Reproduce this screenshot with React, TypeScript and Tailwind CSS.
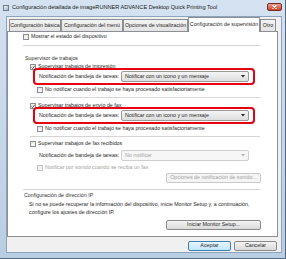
import { ReactNode } from 'react'

const Box = ({ checked, disabled }: { checked?: boolean; disabled?: boolean }) => (
  <span
    className={`flex h-[6px] w-[6px] shrink-0 items-center justify-center border ${
      disabled ? 'border-[#c4c4c4] bg-[#f4f4f4]' : 'border-[#8e8f8f] bg-gradient-to-b from-[#e6e6e6] to-[#fbfbfb]'
    }`}
  >
    {checked && (
      <svg width="5" height="5" viewBox="0 0 5 5">
        <path d="M0.6 2.4 L2 3.9 L4.4 0.8" stroke="#27406b" strokeWidth="1.1" fill="none" />
      </svg>
    )}
  </span>
)

const Check = ({
  label,
  checked,
  disabled,
  className,
}: {
  label: string
  checked?: boolean
  disabled?: boolean
  className: string
}) => (
  <div className={`flex h-[8px] items-center gap-[2px] ${className}`}>
    <Box checked={checked} disabled={disabled} />
    <span className={disabled ? 'text-[#a3a3a3]' : ''}>{label}</span>
  </div>
)

const Arrow = ({ disabled }: { disabled?: boolean }) => (
  <svg width="4" height="3" viewBox="0 0 4 3" className="ml-auto">
    <path d="M0 0 H4 L2 2.5 Z" fill={disabled ? '#b5b5b5' : '#222'} />
  </svg>
)

const Select = ({ value, disabled }: { value: string; disabled?: boolean }) => (
  <div
    className={`flex h-[11px] w-[128px] items-center rounded-[2px] border px-[3px] ${
      disabled
        ? 'border-[#cfcfcf] bg-[#f6f6f6] text-[#a3a3a3]'
        : 'border-[#9a9a9a] bg-gradient-to-b from-[#f5f5f5] to-[#dddddd]'
    }`}
  >
    <span>{value}</span>
    <Arrow disabled={disabled} />
  </div>
)

const Btn = ({ children, disabled, className }: { children: ReactNode; disabled?: boolean; className: string }) => (
  <div
    className={`flex h-[10px] items-center justify-center rounded-[2px] border ${
      disabled
        ? 'border-[#c9c9c9] bg-[#f4f4f4] text-[#a3a3a3]'
        : 'border-[#8a8a8a] bg-gradient-to-b from-[#f3f3f3] to-[#dadada]'
    } ${className}`}
  >
    {children}
  </div>
)

// red highlight frame around the tray notification row
const Notify = ({ className }: { className: string }) => (
  <div className={`ml-[25px] flex h-[17px] w-[222px] items-center rounded-[4px] border-2 border-[#e60012] pl-[4px] pr-[4px] ${className}`}>
    <span>Notificación de bandeja de tareas:</span>
    <div className="ml-auto">
      <Select value="Notificar con un icono y un mensaje" />
    </div>
  </div>
)

const Tab = ({ label, w }: { label: string; w: string }) => (
  <div
    className={`mt-[2px] flex h-[12px] items-center justify-center border border-b-0 border-[#8c8e94] bg-gradient-to-b from-[#f3f3f3] to-[#e3e3e3] ${w}`}
  >
    {label}
  </div>
)

export default function App() {
  return (
    <div
      className="flex h-[259px] w-[286px] flex-col overflow-hidden border-r border-b border-[#4e6a88] bg-gradient-to-b from-[#d4e2f1] to-[#b9cde3] text-[5.3px] leading-none text-[#262626]"
      style={{ fontFamily: '"Liberation Sans", Arial, sans-serif' }}
    >
      {/* title bar */}
      <div className="flex h-[16px] shrink-0 items-center pl-[3px]">
        <div className="h-[6px] w-[6px] border border-[#6b7c8f] bg-gradient-to-br from-[#f7f7f7] to-[#9fb3c8]" />
        <span className="ml-[3px] text-[5.6px] text-[#1a1a1a]">
          Configuración detallada de imageRUNNER ADVANCE Desktop Quick Printing Tool
        </span>
        <div className="mb-[3px] ml-auto mr-[3px] flex h-[8px] w-[15px] items-center justify-center rounded-[2px] border border-[#7a2d22] bg-gradient-to-b from-[#e8a090] to-[#c4422b]">
          <svg width="5" height="4" viewBox="0 0 5 4">
            <path d="M0.5 0.3 L4.5 3.7 M4.5 0.3 L0.5 3.7" stroke="#fff" strokeWidth="1.1" />
          </svg>
        </div>
      </div>

      {/* client */}
      <div className="ml-[6px] mr-[3px] flex h-[237px] flex-col border border-[#8da4bd] bg-[#f0f0f0] pr-[3px]">
        {/* tabs */}
        <div className="flex h-[14px] items-end pl-[2px]">
          <Tab label="Configuración básica" w="w-[52px]" />
          <Tab label="Configuración del menú" w="w-[62px]" />
          <Tab label="Opciones de visualización" w="w-[65px]" />
          <div className="relative z-10 -mb-px flex h-[15px] w-[72px] items-center justify-center border border-b-0 border-[#8c8e94] bg-white">
            Configuración de supervisión
          </div>
          <Tab label="Otro" w="w-[16px]" />
        </div>

        {/* panel */}
        <div className="flex h-[206px] flex-col border border-[#8c8e94] bg-white">
          <Check label="Mostrar el estado del dispositivo" className="ml-[15px] mt-[1px]" />
          <div className="ml-[15px] mt-[4px] h-px w-[237px] bg-[#d5d5d5]" />

          <div className="ml-[17px] mt-[9px] flex h-[8px] items-center text-[#333]">Supervisor de trabajos</div>
          <Check label="Supervisar trabajos de impresión" checked className="ml-[22px]" />
          <Notify className="-mt-[3px]" />
          <Check label="No notificar cuando el trabajo se haya procesado satisfactoriamente" className="ml-[29px] mt-[1px]" />
          <div className="ml-[22px] mt-[3px] h-px w-[230px] bg-[#d5d5d5]" />

          <Check label="Supervisar trabajos de envío de fax" checked className="ml-[22px] mt-[4px]" />
          <Notify className="-mt-[3px]" />
          <Check label="No notificar cuando el trabajo se haya procesado satisfactoriamente" className="ml-[29px] mt-[1px]" />
          <div className="ml-[22px] mt-[3px] h-px w-[230px] bg-[#d5d5d5]" />

          <Check label="Supervisar trabajos de fax recibidos" className="ml-[22px] mt-[3px]" />
          <div className="ml-[31px] mt-[2px] flex h-[11px] w-[210px] items-center">
            <span>Notificación de bandeja de tareas:</span>
            <div className="ml-auto">
              <Select value="No notificar" disabled />
            </div>
          </div>
          <Check label="Notificar por sonido cuando se reciba un fax" disabled className="ml-[29px] mt-[3px]" />
          <Btn disabled className="mr-[16px] mt-[1px] w-[95px] self-end">
            Opciones de notificación de sonido...
          </Btn>
          <div className="ml-[15px] mt-[6px] h-px w-[237px] bg-[#d5d5d5]" />

          <div className="ml-[16px] mt-[2px] flex h-[8px] items-center text-[#333]">Configuración de dirección IP</div>
          <div className="ml-[21px] mt-[1px] flex h-[8px] items-center">
            Si no se puede recuperar la información del dispositivo, inicie Monitor Setup y, a continuación,
          </div>
          <div className="ml-[21px] flex h-[8px] items-center">configure los ajustes de dirección IP.</div>
          <Btn className="mr-[16px] mt-[3px] w-[95px] self-end">Iniciar Monitor Setup...</Btn>
        </div>

        {/* footer buttons */}
        <div className="mt-[4px] flex justify-end gap-[3px] pr-[1px]">
          <div className="flex h-[10px] w-[43px] items-center justify-center rounded-[2px] border border-[#3c7fb1] bg-gradient-to-b from-[#eaf6fd] to-[#bee6fd]">
            Aceptar
          </div>
          <Btn className="w-[43px]">Cancelar</Btn>
        </div>
      </div>
    </div>
  )
}
